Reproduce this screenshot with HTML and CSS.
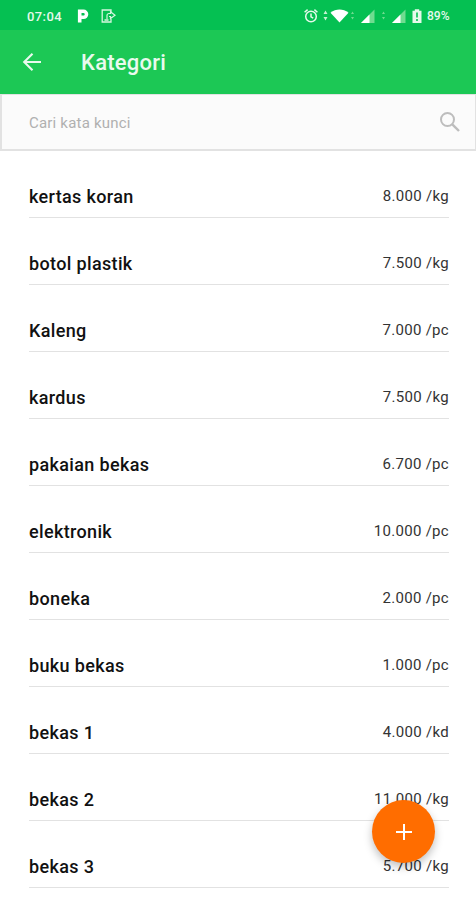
FILE: index.html
```html
<!DOCTYPE html>
<html lang="id">
<head>
    <meta charset="UTF-8">
    <meta name="viewport" content="width=device-width, initial-scale=1.0">
    <title>Kategori</title>
    <link rel="stylesheet" href="styles.css">
</head>
<body>

    <!-- Status bar -->
    <div class="status-bar">
        <span class="clock">07:04</span>
        <svg class="icon-p" width="12" height="14" viewBox="0 0 12 14">
            <path d="M2.700 13.500V2.300H6.500a2.900 2.900 0 0 1 0 6H4" fill="none" stroke="#fff" stroke-width="3.600"/>
        </svg>
        <svg class="icon-doc" width="15" height="14" viewBox="0 0 15 14">
            <path d="M10 3V1H1.200v12H10v-3M3.500 11h4" fill="none" stroke="#d6f6df" stroke-width="1.300"/>
            <path d="M6 10V6.500a2 2 0 0 1 2-2h1.500V2.800L14 6.300 9.500 9.500V7.500H8" fill="none" stroke="#d6f6df" stroke-width="1.200"/>
        </svg>
        <div class="status-right">
            <svg width="140" height="18" viewBox="0 0 140 18">
                <g fill="none" stroke="#e6f9eb" stroke-width="1.500">
                    <circle cx="8" cy="9.500" r="5.300"/>
                    <path d="M8 6.500v3.300l2.200 1.400M1.600 5.200l3-2.600M14.400 5.200l-3-2.600"/>
                </g>
                <path d="M20.500 7l2-3.500 2 3.500zM20.500 10l2 3.500 2-3.500z" fill="#c4f2d1"/>
                <path d="M27.500 5.700C33 1.400 40 1.400 45.500 5.700L36.500 15.500z" fill="#fff"/>
                <path d="M48 7l1.500-2.500L51 7zM48 10l1.500 2.500L51 10z" fill="#6fdc90"/>
                <path d="M71.500 2.500v13.500H58z" fill="#6fdc90"/>
                <path d="M66.500 7.500V16H58z" fill="#fff"/>
                <path d="M79 7l1.500-2.500L82 7zM79 10l1.500 2.500L82 10z" fill="#6fdc90"/>
                <path d="M102.500 2.500v13.500H89z" fill="#6fdc90"/>
                <path d="M97.500 7.500V16H89z" fill="#fff"/>
                <path d="M109.500 3.700h2.300V2.300h4.400v1.400h2.300V16h-9z" fill="#e6f9eb"/>
                <path d="M114 5.500v5M114 12v2" stroke="#05c052" stroke-width="1.600"/>
            </svg>
            <span class="battery">89%</span>
        </div>
    </div>

    <!-- Header -->
    <div class="header">
        <svg class="back" width="20" height="20" viewBox="0 0 20 20">
            <path d="M19 10H2.500M10.500 1.700L2.200 10l8.300 8.300" fill="none" stroke="#e9faee" stroke-width="2.100"/>
        </svg>
        <h1>Kategori</h1>
    </div>

    <!-- Search -->
    <div class="search">
        <input type="text" placeholder="Cari kata kunci">
        <svg width="22" height="22" viewBox="0 0 22 22">
            <circle cx="8.500" cy="8.500" r="6.500" fill="none" stroke="#bdbdbd" stroke-width="2"/>
            <path d="M13.300 13.300l6.700 6.700" stroke="#bdbdbd" stroke-width="2.400"/>
        </svg>
    </div>

    <!-- Category list -->
    <ul class="list">
        <li><span class="name">kertas koran</span><span class="price">8.000 /kg</span></li>
        <li><span class="name">botol plastik</span><span class="price">7.500 /kg</span></li>
        <li><span class="name">Kaleng</span><span class="price">7.000 /pc</span></li>
        <li><span class="name">kardus</span><span class="price">7.500 /kg</span></li>
        <li><span class="name">pakaian bekas</span><span class="price">6.700 /pc</span></li>
        <li><span class="name">elektronik</span><span class="price">10.000 /pc</span></li>
        <li><span class="name">boneka</span><span class="price">2.000 /pc</span></li>
        <li><span class="name">buku bekas</span><span class="price">1.000 /pc</span></li>
        <li><span class="name">bekas 1</span><span class="price">4.000 /kd</span></li>
        <li><span class="name">bekas 2</span><span class="price">11.000 /kg</span></li>
        <li><span class="name">bekas 3</span><span class="price">5.700 /kg</span></li>
    </ul>

    <button class="fab" aria-label="Tambah">
        <svg width="18" height="18" viewBox="0 0 18 18">
            <path d="M9 1v16M1 9h16" stroke="#fff" stroke-width="2"/>
        </svg>
    </button>

</body>
</html>
```

FILE: styles.css
```css
* {
    margin: 0;
    padding: 0;
    box-sizing: border-box;
}

body {
    font-family: Roboto, sans-serif;
    background-color: #fff;
    color: #111;
    height: 900px;
    overflow: hidden;
}

/* Status bar */
.status-bar {
    display: flex;
    align-items: center;
    height: 30px;
    padding: 2px 26px 0 27px;
    background-color: #05c052;
    color: #e6f9eb;
    font-size: 13px;
    font-weight: 500;
}

.clock {
    width: 50px;
    letter-spacing: 0.4px;
}

.icon-doc {
    margin-left: 12px;
}

.status-right {
    display: flex;
    align-items: center;
    margin-left: auto;
}

.battery {
    width: 23px;
    font-size: 12px;
    margin-left: -16px;
}

/* Header */
.header {
    display: flex;
    align-items: center;
    height: 64px;
    padding-left: 22px;
    background-color: #1cc855;
}

.header h1 {
    margin-left: 39px;
    padding-top: 1px;
    font-size: 22px;
    font-weight: 500;
    letter-spacing: 0.25px;
    color: #e9faee;
}

/* Search */
.search {
    display: flex;
    align-items: center;
    justify-content: space-between;
    height: 57px;
    padding: 0 14px 0 27px;
    background-color: #fbfbfb;
    border: 1px solid #e2e2e2;
    border-width: 1px 1px 2px 2px;
}

.search input {
    width: 300px;
    padding-top: 1px;
    border: none;
    outline: none;
    background: none;
    font-family: inherit;
    font-size: 15px;
    letter-spacing: 0.2px;
}

.search input::placeholder {
    color: #b0b0b0;
}

/* Category list */
.list {
    list-style: none;
    padding: 0 27px 0 29px;
}

.list li {
    display: flex;
    align-items: center;
    justify-content: space-between;
    height: 67px;
    padding-top: 24px;
    border-bottom: 1px solid #e2e2e2;
}

.name {
    font-size: 18px;
    font-weight: 500;
    letter-spacing: 0.35px;
}

.price {
    font-size: 15px;
    letter-spacing: 0.3px;
    color: #333;
}

/* Floating add button */
.fab {
    position: fixed;
    right: 41px;
    bottom: 37px;
    display: flex;
    align-items: center;
    justify-content: center;
    width: 63px;
    height: 63px;
    border: none;
    border-radius: 50%;
    background-color: #ff6d00;
    box-shadow: 0 4px 8px rgba(0, 0, 0, 0.25);
}
```
